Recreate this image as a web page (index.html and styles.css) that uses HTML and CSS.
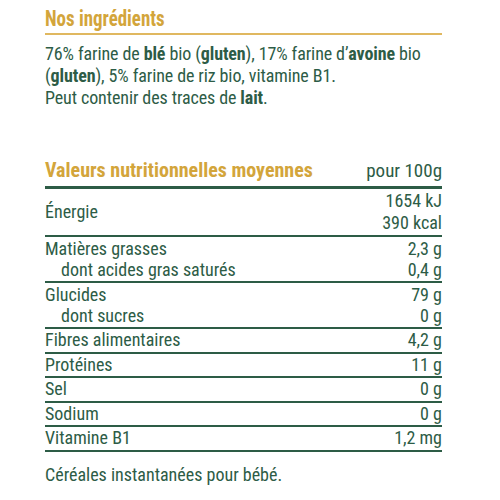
FILE: index.html
```html
<!DOCTYPE html>
<html lang="fr">
<head>
    <meta charset="UTF-8">
    <meta name="viewport" content="width=device-width, initial-scale=1.0">
    <title>Nos ingrédients</title>
    <link rel="stylesheet" href="styles.css">
</head>
<body>
    <div class="panel">
        <h2 class="title"><span>Nos ingrédients</span></h2>
        <p class="ingredients">
            76% farine de <b>blé</b> bio (<b>gluten</b>), 17% farine d’<b>avoine</b> bio
            (<b>gluten</b>), 5% farine de riz bio, vitamine B1.<br>
            Peut contenir des traces de <b>lait</b>.
        </p>

        <div class="nutri">
            <div class="nutri-head">
                <span class="head-label">Valeurs nutritionnelles moyennes</span>
                <span class="head-unit">pour 100g</span>
            </div>

            <div class="group energy">
                <span>Énergie</span>
                <div class="values">
                    <span>1654 kJ</span>
                    <span>390 kcal</span>
                </div>
            </div>

            <div class="group double">
                <div class="row"><span>Matières grasses</span><span>2,3 g</span></div>
                <div class="row sub"><span>dont acides gras saturés</span><span>0,4 g</span></div>
            </div>

            <div class="group double">
                <div class="row"><span>Glucides</span><span>79 g</span></div>
                <div class="row sub"><span>dont sucres</span><span>0 g</span></div>
            </div>

            <div class="group">
                <div class="row"><span>Fibres alimentaires</span><span>4,2 g</span></div>
            </div>
            <div class="group">
                <div class="row"><span>Protéines</span><span>11 g</span></div>
            </div>
            <div class="group">
                <div class="row"><span>Sel</span><span>0 g</span></div>
            </div>
            <div class="group">
                <div class="row"><span>Sodium</span><span>0 g</span></div>
            </div>
            <div class="group">
                <div class="row"><span>Vitamine B1</span><span>1,2 mg</span></div>
            </div>
        </div>

        <p class="note">Céréales instantanées pour bébé.</p>
    </div>
</body>
</html>
```

FILE: styles.css
```css
* {
    margin: 0;
    padding: 0;
    box-sizing: border-box;
}

body {
    background: #fff;
    font-family: "Roboto Condensed", "Liberation Sans", sans-serif;
    color: #2d5c46;
}

.panel {
    width: 397px;
    margin-left: 45px;
    padding-top: 6px;
}

.title {
    font-size: 22px;
    font-weight: bold;
    color: #d3a53b;
    line-height: 26px;
    padding-bottom: 1px;
    border-bottom: 2px solid #e0b860;
}

.title span {
    display: inline-block;
    transform: scaleX(0.86);
    transform-origin: left center;
}

.ingredients {
    font-size: 18px;
    letter-spacing: -0.1px;
    line-height: 22px;
    margin-top: 8px;
}

.nutri {
    margin-top: 49px;
    font-size: 18px;
}

.nutri-head {
    display: flex;
    justify-content: space-between;
    align-items: baseline;
    line-height: 24px;
    padding-bottom: 3px;
    border-bottom: 3px solid #2d5c46;
}

.head-label {
    color: #d3a53b;
    font-size: 20px;
    font-weight: bold;
}

.head-unit {
    font-size: 19px;
}

.group {
    border-bottom: 2px solid #2d5c46;
    line-height: 22.5px;
}

.double {
    padding: 1px 0;
    line-height: 21px;
}

.energy {
    display: flex;
    justify-content: space-between;
    align-items: center;
    padding: 1px 0;
}

.values {
    display: flex;
    flex-direction: column;
    align-items: flex-end;
    line-height: 22px;
}

.row {
    display: flex;
    justify-content: space-between;
}

.sub {
    padding-left: 16px;
}

.note {
    font-size: 18px;
    margin-top: 12px;
}
```
